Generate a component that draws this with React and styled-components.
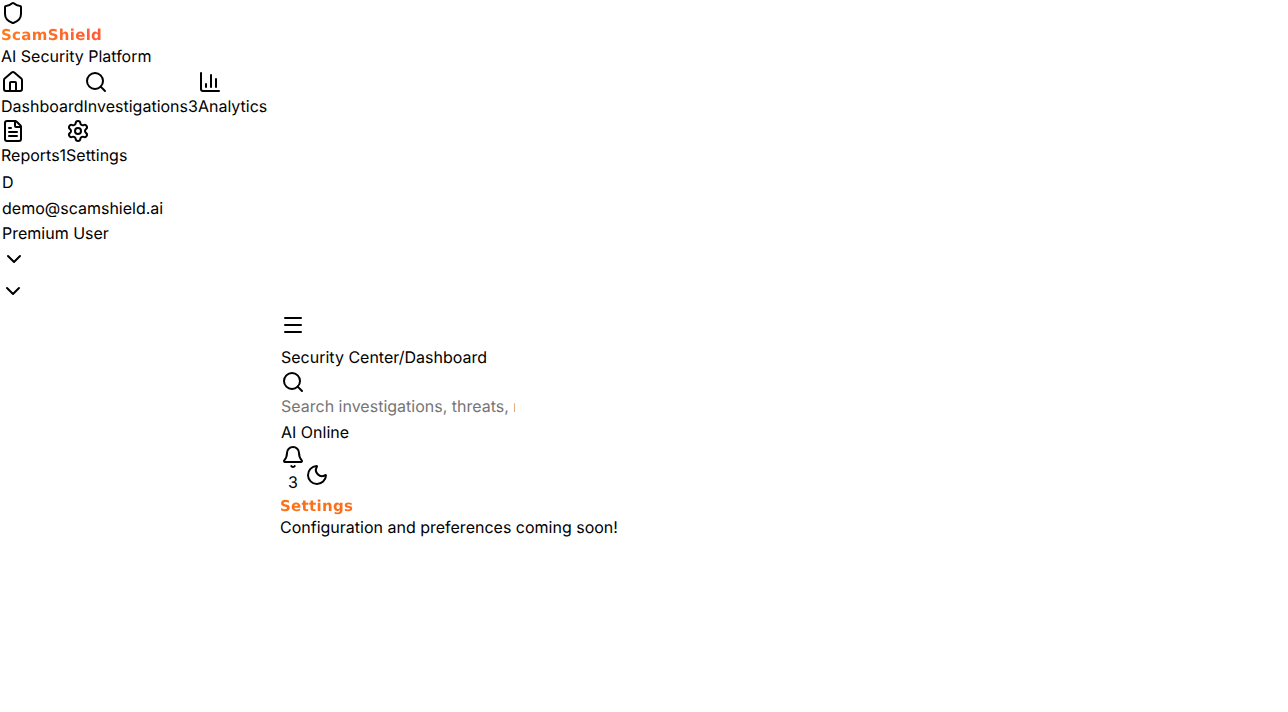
import React from 'react';
import styled, { createGlobalStyle } from 'styled-components';
import { Shield, House, Search, ChartColumn, FileText, Settings, ChevronDown, Menu, Bell, Moon } from 'lucide-react';

const Global = createGlobalStyle`
  html, body { margin: 0; padding: 0; background: #fff; }
  body { font-family: Inter, "Liberation Sans", sans-serif; font-size: 16px; line-height: 24px; color: #000; text-rendering: geometricPrecision; }
  svg { display: block; }
`;
const Page = styled.div`display: flex; align-items: flex-start; min-height: 712px;`;
const Sidebar = styled.aside`width: 280px; flex: none; display: flex; flex-direction: column; padding-top: 1px;`;
const Brand = styled.div`padding-left: 1px; margin-bottom: 2px;`;
const IconCell = styled.div`height: 24px;`;
const Logo = styled.div`
  font-family: "DejaVu Sans", sans-serif; font-weight: 700; letter-spacing: 0.3px;
  font-size: 15px; line-height: 18px; width: max-content; margin-top: ${p => p.$mt}px;
  background: linear-gradient(90deg, ${p => p.$from}, ${p => p.$to});
  -webkit-background-clip: text; background-clip: text; color: transparent;
`;
const Tagline = styled.div``;
const NavItem = styled.a`display: block;`;
const Badge = styled.span`align-self: flex-end;`;
const NavRow = styled.div`display: flex; margin-bottom: 1px; padding-left: 1px;`;
const User = styled.div`padding-left: 2px; margin-top: 2px;`;
const UserLine = styled.div`height: 25.5px;`;
const Chevron = styled.div`margin-left: ${p => p.$ml}px; margin-top: ${p => p.$mt}px;`;
const Main = styled.main`flex: 1; padding-top: 313px;`;
const Header = styled.header`padding-left: 1px;`;
const Crumb = styled.div`margin: 8px 0 1px;`;
const SearchInput = styled.input`
  display: block; width: 234px; padding: 0; border: 0; outline: 0; background: transparent;
  font: 16px/24px Inter, sans-serif; color: #000; text-rendering: geometricPrecision;
  &::placeholder { color: #757575; opacity: 1; }
`;
const Status = styled.div`margin-top: 2px;`;
const Actions = styled.div`display: flex; align-items: flex-start; margin-top: 1px;`;
const BellWrap = styled.div`text-align: center; width: 24px;`;
const BellCount = styled.div`margin-top: 1px;`;
const MoonWrap = styled.div`margin-top: 18px;`;
const Content = styled.section`padding-top: 3px;`;
const Para = styled.p`margin: 0; line-height: 24px;`;

export default function App() {
  return (
    <Page>
      <Global />
      <Sidebar>
        <Brand>
          <IconCell><Shield size={24} /></IconCell>
          <Logo $mt={1} $from="#ff7a1a" $to="#ff5a36">ScamShield</Logo>
          <Tagline>AI Security Platform</Tagline>
        </Brand>
        <NavRow>
          <NavItem><IconCell><House size={24} /></IconCell>Dashboard</NavItem>
          <NavItem><IconCell><Search size={24} /></IconCell>Investigations</NavItem>
          <Badge>3</Badge>
          <NavItem><IconCell><ChartColumn size={24} /></IconCell>Analytics</NavItem>
        </NavRow>
        <NavRow>
          <NavItem><IconCell><FileText size={24} /></IconCell>Reports</NavItem>
          <Badge>1</Badge>
          <NavItem><IconCell><Settings size={24} /></IconCell>Settings</NavItem>
        </NavRow>
        <User>
          <UserLine>D</UserLine>
          <UserLine>demo@scamshield.ai</UserLine>
          <UserLine>Premium User</UserLine>
          <Chevron $ml={0} $mt={0}><ChevronDown size={24} /></Chevron>
          <Chevron $ml={-1} $mt={8}><ChevronDown size={24} /></Chevron>
        </User>
      </Sidebar>
      <Main>
        <Header>
          <Menu size={24} />
          <Crumb>Security Center/Dashboard</Crumb>
          <Search size={24} />
          <SearchInput placeholder="Search investigations, threats, reports..." />
          <Status>AI Online</Status>
          <Actions>
            <BellWrap><Bell size={24} /><BellCount>3</BellCount></BellWrap>
            <MoonWrap><Moon size={24} /></MoonWrap>
          </Actions>
        </Header>
        <Content>
          <Logo $mt={0} $from="#f97316" $to="#ff6b1a">Settings</Logo>
          <Para>Configuration and preferences coming soon!</Para>
        </Content>
      </Main>
    </Page>
  );
}
